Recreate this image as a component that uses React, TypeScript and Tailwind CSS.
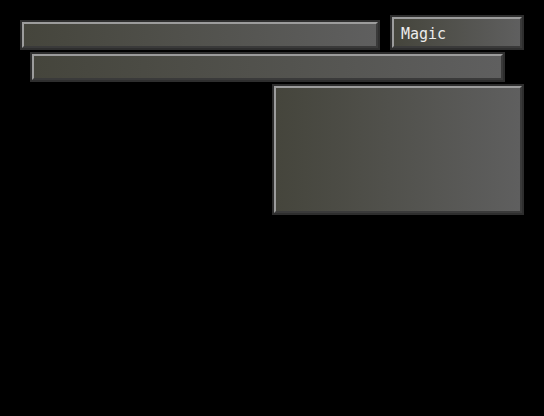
import type { ReactNode } from 'react'

function Panel({ className, children }: { className: string; children?: ReactNode }) {
  return (
    <div className={`border-2 border-[#2e2e2e] ${className}`}>
      <div className="h-full border-2 border-t-[#9c9c9c] border-l-[#9c9c9c] border-b-[#3a3a3a] border-r-[#3a3a3a] bg-gradient-to-r from-[#45453c] to-[#5f5f5f]">
        {children}
      </div>
    </div>
  )
}

export default function App() {
  return (
    <div className="w-[544px] h-[416px] bg-black pt-[15px] font-['DejaVu_Sans_Mono',monospace]">
      <div className="flex items-end gap-[10px] pl-[20px]">
        <Panel className="w-[360px] h-[30px]" />
        <Panel className="w-[134px] h-[35px]">
          <div className="pl-[7px] pt-[5px] text-[15px] leading-[20px] text-[#ececec]">Magic</div>
        </Panel>
      </div>
      <Panel className="ml-[30px] mt-[2px] w-[475px] h-[30px]" />
      <Panel className="ml-[272px] mt-[2px] w-[252px] h-[131px]" />
    </div>
  )
}
